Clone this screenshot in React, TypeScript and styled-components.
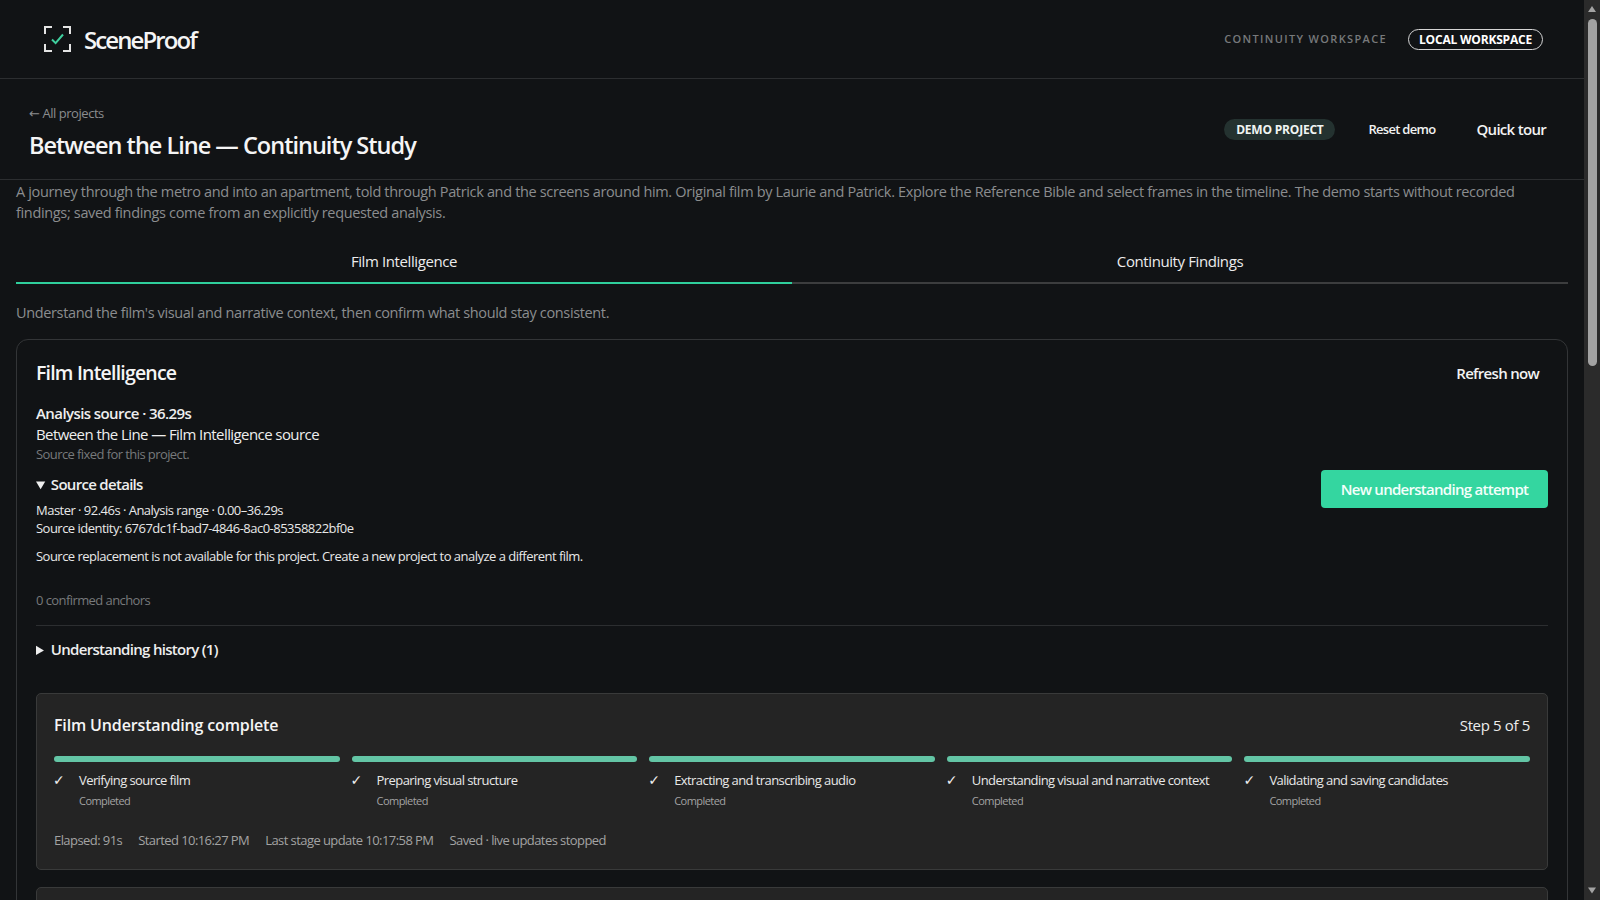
import React from "react";
import styled, { createGlobalStyle } from "styled-components";

const STAGES = [
  "Verifying source film",
  "Preparing visual structure",
  "Extracting and transcribing audio",
  "Understanding visual and narrative context",
  "Validating and saving candidates",
];

const GlobalStyle = createGlobalStyle`
  html, body {
    margin: 0;
    height: 100%;
    overflow: hidden;
    background: #111315;
  }
  body {
    font-family: "Open Sans", "Noto Sans", "Liberation Sans", sans-serif;
    color: #f2f2f2;
  }
  * { box-sizing: border-box; }
`;

const Page = styled.div`
  height: 100vh;
  display: flex;
  overflow: hidden;
  background: #111315;
`;

const Content = styled.div`
  flex: 1;
  min-width: 0;
`;

const ScrollRail = styled.aside`
  width: 16px;
  flex-shrink: 0;
  display: flex;
  flex-direction: column;
  align-items: center;
  background: #2b2b2b;
`;

const ScrollArrow = styled.svg<{ $down?: boolean }>`
  display: block;
  width: 16px;
  height: 17px;
  margin-top: ${(p) => (p.$down ? "auto" : "0")};
`;

const ScrollThumb = styled.div`
  width: 9px;
  height: 347px;
  margin-top: 2px;
  border-radius: 5px;
  background: #a3a3a3;
`;

const TopBar = styled.header`
  height: 79px;
  display: flex;
  align-items: center;
  justify-content: space-between;
  padding: 0 41px 0 44px;
  border-bottom: 1px solid #2c2e30;
`;

const Brand = styled.div`
  display: flex;
  align-items: center;
  gap: 13px;
`;

const Wordmark = styled.span`
  font-size: 24px;
  font-weight: 600;
  letter-spacing: -1.9px;
  color: #f5f5f5;
`;

const TopRight = styled.div`
  display: flex;
  align-items: center;
  gap: 21px;
`;

const Eyebrow = styled.span`
  margin-bottom: 2px;
  font-size: 11px;
  font-weight: 600;
  letter-spacing: 1.35px;
  color: #77797b;
  text-transform: uppercase;
`;

const WorkspacePill = styled.span`
  height: 21px;
  width: 135px;
  margin-top: 1px;
  display: flex;
  align-items: center;
  justify-content: center;
  border: 1px solid #d5d5d5;
  border-radius: 11px;
  font-size: 12px;
  font-weight: 700;
  letter-spacing: -0.2px;
  color: #fff;
`;

const ProjectHead = styled.section`
  height: 101px;
  display: flex;
  align-items: center;
  justify-content: space-between;
  padding: 0 38px 0 29px;
  border-bottom: 1px solid #2c2e30;
`;

const ProjectTitleBlock = styled.div`
  display: flex;
  flex-direction: column;
  gap: 6px;
  margin-top: 7px;
`;

const BackLink = styled.a`
  font-size: 13px;
  line-height: 18px;
  letter-spacing: -0.45px;
  color: #8a8c8e;
`;

const BackArrow = styled.span`
  font-family: "DejaVu Sans", sans-serif;
`;

const ProjectTitle = styled.h1`
  margin: 0;
  font-size: 23.5px;
  line-height: 32px;
  font-weight: 600;
  letter-spacing: -1px;
  color: #f5f5f5;
`;

const ProjectActions = styled.div`
  display: flex;
  align-items: center;
`;

const DemoPill = styled.span`
  height: 21px;
  width: 111px;
  display: flex;
  align-items: center;
  justify-content: center;
  border-radius: 11px;
  background: #243230;
  font-size: 12px;
  font-weight: 700;
  letter-spacing: -0.2px;
  color: #f0f5f3;
`;

const GhostButton = styled.button<{ $size: number; $left: number }>`
  margin-left: ${(p) => p.$left}px;
  padding: 0;
  border: 0;
  background: none;
  font-family: inherit;
  font-size: ${(p) => p.$size}px;
  font-weight: 600;
  letter-spacing: -0.7px;
  color: #f2f2f2;
`;

const Main = styled.main`
  padding: 0 16px 16px;
`;

const Intro = styled.p`
  margin: 1px 0 0;
  font-size: 14.5px;
  line-height: 21px;
  letter-spacing: -0.34px;
  color: #8b8d8f;
`;

const Tabs = styled.nav`
  margin-top: 12px;
  display: grid;
  grid-template-columns: 1fr 1fr;
`;

const Tab = styled.div<{ $active?: boolean }>`
  height: 49px;
  padding-top: 4px;
  display: flex;
  align-items: center;
  justify-content: center;
  border-bottom: 2px solid ${(p) => (p.$active ? "#2fcf9c" : "#3c3d3e")};
  font-size: 15px;
  letter-spacing: -0.4px;
  color: #ececec;
`;

const TabHint = styled.p`
  margin: 18px 0 16px;
  font-size: 14.5px;
  line-height: 21px;
  letter-spacing: -0.36px;
  color: #8b8d8f;
`;

const Panel = styled.section`
  border: 1px solid #333537;
  border-radius: 12px;
  padding: 19px 19px 0;
`;

const PanelHead = styled.div`
  display: flex;
  align-items: center;
  justify-content: space-between;
  padding-right: 9px;
`;

const PanelTitle = styled.h2`
  margin: 0;
  font-size: 19.5px;
  line-height: 28px;
  font-weight: 600;
  letter-spacing: -0.8px;
  color: #f5f5f5;
`;

const SourceRow = styled.div`
  margin-top: 16px;
  display: flex;
  justify-content: space-between;
  align-items: center;
`;

const SourceName = styled.div<{ $bold?: boolean }>`
  font-size: 15px;
  line-height: 21px;
  font-weight: ${(p) => (p.$bold ? 600 : 400)};
  letter-spacing: -0.58px;
  color: #eeeeee;
`;

const Muted = styled.div`
  font-size: 13px;
  line-height: 18px;
  letter-spacing: -0.58px;
  color: #77797b;
`;

const Disclosure = styled.details`
  margin-top: 11px;
`;

const DisclosureLabel = styled.summary`
  font-size: 15px;
  line-height: 20px;
  font-weight: 600;
  letter-spacing: -0.7px;
  color: #eeeeee;

  &::marker {
    font-size: 14px;
  }
`;

const DetailLine = styled.div`
  font-size: 13px;
  line-height: 18px;
  letter-spacing: -0.52px;
  color: #e8e8e8;
`;

const DetailBlock = styled.div`
  margin-top: 6px;
`;

const Notice = styled(DetailLine)`
  margin-top: 10px;
`;

const PrimaryButton = styled.button`
  width: 227px;
  height: 38px;
  margin-top: 10px;
  border: 0;
  border-radius: 4px;
  background: #34d6a0;
  font-family: inherit;
  font-size: 15px;
  font-weight: 600;
  letter-spacing: -0.72px;
  color: #f4fffb;
`;

const Anchors = styled(Muted)`
  margin-top: 26px;
  padding-bottom: 16px;
  border-bottom: 1px solid #2c2e30;
`;

const History = styled(Disclosure)`
  margin-top: 13px;
`;

const ProgressCard = styled.section`
  margin-top: 33px;
  height: 177px;
  padding: 0 17px;
  background: #242424;
  border: 1px solid #393a3a;
  border-radius: 5px;
`;

const ProgressHead = styled.div`
  height: 62px;
  display: flex;
  align-items: center;
  justify-content: space-between;
`;

const ProgressTitle = styled.h3`
  margin: 0;
  font-size: 16px;
  font-weight: 600;
  letter-spacing: -0.15px;
  color: #f5f5f5;
`;

const StepCount = styled.span`
  font-size: 15px;
  letter-spacing: -0.35px;
  color: #ececec;
`;

const Stages = styled.div`
  display: grid;
  grid-template-columns: repeat(5, 1fr);
  gap: 12px;
`;

const Stage = styled.div`
  display: grid;
  grid-template-columns: 25px 1fr;
`;

const StageBar = styled.div`
  grid-column: 1 / 3;
  height: 6px;
  border-radius: 3px;
  background: #63c5a5;
  margin-bottom: 8px;
`;

const StageCheck = styled.span`
  margin-left: -1px;
  font-family: "DejaVu Sans", sans-serif;
  font-size: 14px;
  line-height: 20px;
  color: #eeeeee;
`;

const StageLabel = styled.span`
  font-size: 13px;
  line-height: 20px;
  letter-spacing: -0.58px;
  color: #e8e8e8;
`;

const StageState = styled.span`
  grid-column: 2;
  margin-top: 3px;
  font-size: 11px;
  line-height: 16px;
  letter-spacing: -0.55px;
  color: #a3a3a3;
`;

const Timing = styled.div`
  margin-top: 22px;
  display: flex;
  gap: 16px;
  font-size: 13px;
  line-height: 18px;
  letter-spacing: -0.57px;
  color: #a3a3a3;
`;

const NextCard = styled.section`
  margin-top: 17px;
  height: 120px;
  background: #242424;
  border: 1px solid #393a3a;
  border-radius: 5px;
`;

const Logo = () => (
  <svg width="27" height="26" viewBox="0 0 27 26" fill="none">
    <path
      d="M1 8V1h7M19 1h7v7M26 18v7h-7M8 25H1v-7"
      stroke="#e4e4e4"
      strokeWidth="2"
    />
    <path d="M8 13.5l3.6 3.6L19 8.5" stroke="#3fcf9e" strokeWidth="2" />
  </svg>
);

export default function App() {
  return (
    <Page>
      <GlobalStyle />
      <Content>
        <TopBar>
          <Brand>
            <Logo />
            <Wordmark>SceneProof</Wordmark>
          </Brand>
          <TopRight>
            <Eyebrow>Continuity Workspace</Eyebrow>
            <WorkspacePill>LOCAL WORKSPACE</WorkspacePill>
          </TopRight>
        </TopBar>

        <ProjectHead>
          <ProjectTitleBlock>
            <BackLink><BackArrow>←</BackArrow> All projects</BackLink>
            <ProjectTitle>Between the Line — Continuity Study</ProjectTitle>
          </ProjectTitleBlock>
          <ProjectActions>
            <DemoPill>DEMO PROJECT</DemoPill>
            <GhostButton $size={13} $left={33}>Reset demo</GhostButton>
            <GhostButton $size={15} $left={41}>Quick tour</GhostButton>
          </ProjectActions>
        </ProjectHead>

        <Main>
          <Intro>
            A journey through the metro and into an apartment, told through Patrick and the screens
            around him. Original film by Laurie and Patrick. Explore the Reference Bible and select
            frames in the timeline. The demo starts without recorded findings; saved findings come
            from an explicitly requested analysis.
          </Intro>

          <Tabs>
            <Tab $active>Film Intelligence</Tab>
            <Tab>Continuity Findings</Tab>
          </Tabs>
          <TabHint>
            Understand the film's visual and narrative context, then confirm what should stay
            consistent.
          </TabHint>

          <Panel>
            <PanelHead>
              <PanelTitle>Film Intelligence</PanelTitle>
              <GhostButton $size={15} $left={0}>Refresh now</GhostButton>
            </PanelHead>

            <SourceRow>
              <div>
                <SourceName $bold>Analysis source · 36.29s</SourceName>
                <SourceName>Between the Line — Film Intelligence source</SourceName>
                <Muted>Source fixed for this project.</Muted>
                <Disclosure open>
                  <DisclosureLabel>Source details</DisclosureLabel>
                  <DetailBlock>
                    <DetailLine>Master · 92.46s · Analysis range · 0.00–36.29s</DetailLine>
                    <DetailLine>Source identity: 6767dc1f-bad7-4846-8ac0-85358822bf0e</DetailLine>
                    <Notice>
                      Source replacement is not available for this project. Create a new project to
                      analyze a different film.
                    </Notice>
                  </DetailBlock>
                </Disclosure>
              </div>
              <PrimaryButton>New understanding attempt</PrimaryButton>
            </SourceRow>

            <Anchors>0 confirmed anchors</Anchors>
            <History>
              <DisclosureLabel>Understanding history (1)</DisclosureLabel>
            </History>

            <ProgressCard>
              <ProgressHead>
                <ProgressTitle>Film Understanding complete</ProgressTitle>
                <StepCount>Step 5 of 5</StepCount>
              </ProgressHead>
              <Stages>
                {STAGES.map((stage) => (
                  <Stage key={stage}>
                    <StageBar />
                    <StageCheck>✓</StageCheck>
                    <StageLabel>{stage}</StageLabel>
                    <StageState>Completed</StageState>
                  </Stage>
                ))}
              </Stages>
              <Timing>
                <span>Elapsed: 91s</span>
                <span>Started 10:16:27 PM</span>
                <span>Last stage update 10:17:58 PM</span>
                <span>Saved · live updates stopped</span>
              </Timing>
            </ProgressCard>
            <NextCard />
          </Panel>
        </Main>
      </Content>

      <ScrollRail>
        <ScrollArrow viewBox="0 0 16 17">
          <path d="M8 6l4 6H4z" fill="#a3a3a3" />
        </ScrollArrow>
        <ScrollThumb />
        <ScrollArrow $down viewBox="0 0 16 17">
          <path d="M8 10.5L4 4.5h8z" fill="#a3a3a3" />
        </ScrollArrow>
      </ScrollRail>
    </Page>
  );
}
